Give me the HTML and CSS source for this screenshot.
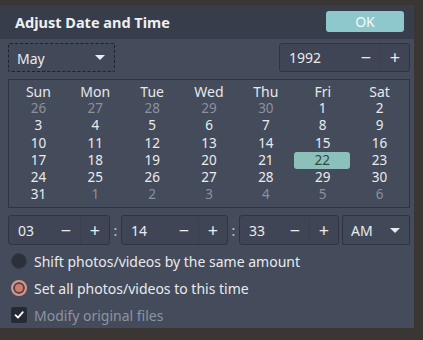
FILE: index.html
```html
<!DOCTYPE html>
<html>
<head>
<meta charset="utf-8">
<link rel="stylesheet" href="styles.css">
</head>
<body>
<div class="dialog">
  <div class="header">
    <div class="title">Adjust Date and Time</div>
    <button class="ok">OK</button>
  </div>
  <div class="content">
    <div class="top-row">
      <div class="combo month focused"><span>May</span><span class="arrow"></span></div>
      <div class="spin year"><span class="val">1992</span><span class="btn minus">−</span><span class="btn plus">+</span></div>
    </div>
    <div class="calendar">
      <div class="dh">Sun</div><div class="dh">Mon</div><div class="dh">Tue</div><div class="dh">Wed</div><div class="dh">Thu</div><div class="dh">Fri</div><div class="dh">Sat</div>
      <div class="d o">26</div><div class="d o">27</div><div class="d o">28</div><div class="d o">29</div><div class="d o">30</div><div class="d">1</div><div class="d">2</div>
      <div class="d">3</div><div class="d">4</div><div class="d">5</div><div class="d">6</div><div class="d">7</div><div class="d">8</div><div class="d">9</div>
      <div class="d">10</div><div class="d">11</div><div class="d">12</div><div class="d">13</div><div class="d">14</div><div class="d">15</div><div class="d">16</div>
      <div class="d">17</div><div class="d">18</div><div class="d">19</div><div class="d">20</div><div class="d">21</div><div class="d sel">22</div><div class="d">23</div>
      <div class="d">24</div><div class="d">25</div><div class="d">26</div><div class="d">27</div><div class="d">28</div><div class="d">29</div><div class="d">30</div>
      <div class="d">31</div><div class="d o">1</div><div class="d o">2</div><div class="d o">3</div><div class="d o">4</div><div class="d o">5</div><div class="d o">6</div>
    </div>
    <div class="time-row">
      <div class="spin hour"><span class="val">03</span><span class="btn minus">−</span><span class="btn plus">+</span></div>
      <span class="colon">:</span>
      <div class="spin minute"><span class="val">14</span><span class="btn minus">−</span><span class="btn plus">+</span></div>
      <span class="colon">:</span>
      <div class="spin second"><span class="val">33</span><span class="btn minus">−</span><span class="btn plus">+</span></div>
      <div class="combo ampm"><span>AM</span><span class="arrow"></span></div>
    </div>
    <div class="option"><span class="radio"></span><span>Shift photos/videos by the same amount</span></div>
    <div class="option"><span class="radio checked"></span><span>Set all photos/videos to this time</span></div>
    <div class="option disabled"><span class="check"><svg width="12" height="12" viewBox="0 0 12 12"><path d="M2.5 6.2 L5 8.7 L9.8 3.2" fill="none" stroke="#ffffff" stroke-width="1.8" stroke-linecap="round" stroke-linejoin="round"/></svg></span><span>Modify original files</span></div>
  </div>
</div>
</body>
</html>
```
FILE: styles.css
```css
html, body {
  margin: 0;
  padding: 0;
  background: #3a3634;
  width: 423px;
  height: 340px;
  overflow: hidden;
}
body {
  font-family: "Noto Sans", "Open Sans", sans-serif;
  font-size: 13px;
  color: #e9ebee;
}
.dialog {
  margin-top: 5px;
  width: 414px;
  height: 323px;
  background: #444b5a;
  display: flex;
  flex-direction: column;
}
.header {
  height: 36px;
  background: #373d4a;
  display: flex;
  align-items: center;
  justify-content: space-between;
  padding: 0 10px 0 15px;
  box-sizing: border-box;
}
.title {
  font-weight: bold;
  font-size: 14.5px;
  color: #eef0f2;
}
.ok {
  width: 78px;
  height: 21px;
  margin-top: -2px;
  border: none;
  border-radius: 3px;
  background: #8ec8cd;
  color: #f4f8f9;
  font-family: inherit;
  font-size: 14px;
  padding: 0;
}
.content {
  padding: 4px 4px 0 8px;
  display: flex;
  flex-direction: column;
}
.top-row {
  display: flex;
  justify-content: space-between;
  height: 29px;
}
.combo {
  box-sizing: border-box;
  border: 1px solid #2f3440;
  border-radius: 2px;
  background: #414858;
  display: flex;
  align-items: center;
  justify-content: space-between;
  padding: 0 8px 0 8px;
  font-size: 14px;
}
.combo.focused {
  border: 1px dashed #1e222a;
}
.month {
  width: 107px;
  height: 29px;
}
.month span:first-child {
  margin-top: 2px;
}
.arrow {
  width: 0;
  height: 0;
  border-left: 5px solid transparent;
  border-right: 5px solid transparent;
  border-top: 5px solid #e8eaed;
  margin-right: 1px;
}
.spin {
  box-sizing: border-box;
  border: 1px solid #2f3440;
  border-radius: 3px;
  background: #3f4555;
  display: flex;
  align-items: center;
  height: 29px;
  font-size: 14px;
}
.spin .val {
  flex: 1;
  padding-left: 9px;
}
.spin .btn {
  width: 28px;
  text-align: center;
  font-size: 18px;
  line-height: 27px;
  height: 27px;
}
.spin .btn.minus {
  border-right: 1px solid #3a404e;
}
.year {
  width: 131px;
}
.calendar {
  margin-top: 7px;
  box-sizing: border-box;
  width: 402px;
  height: 129px;
  border: 1px solid #2f3440;
  display: grid;
  grid-template-columns: repeat(7, 1fr);
  grid-auto-rows: 17.2px;
  padding: 3px 1px 0 1px;
  align-content: start;
  font-size: 13.5px;
}
.calendar .dh, .calendar .d {
  text-align: center;
  line-height: 17px;
}
.calendar .dh {
  font-size: 14px;
  line-height: 18px;
  color: #e6e8eb;
}
.calendar .o {
  color: #8b919d;
}
.calendar .sel {
  background: #8cc0ba;
  color: #2c4a48;
  border-radius: 3px;
  margin: 0 1px 0 0;
}
.time-row {
  margin-top: 7px;
  display: flex;
  align-items: center;
  height: 30px;
}
.time-row .spin {
  height: 30px;
}
.hour { width: 102px; }
.minute { width: 107px; }
.second { width: 100px; }
.colon {
  width: 11px;
  text-align: center;
  font-size: 14px;
  color: #c9ccd2;
}
.ampm {
  margin-left: 3px;
  width: 68px;
  height: 30px;
}
.option {
  display: flex;
  align-items: center;
  height: 26px;
  margin-top: 1px;
  font-size: 14px;
  color: #e8eaed;
}
.time-row + .option {
  margin-top: 3px;
}
.radio {
  box-sizing: border-box;
  width: 16px;
  height: 16px;
  border-radius: 50%;
  background: #2c303a;
  margin: 0 7px 0 3px;
  border: 1px solid #373c48;
}
.radio.checked {
  background: #d27a66;
  border: 2px solid #d9968a;
  box-shadow: inset 0 0 0 2px #4b4652;
}
.check {
  box-sizing: border-box;
  width: 16px;
  height: 16px;
  border-radius: 2px;
  background: #262a35;
  margin: 0 7px 0 3px;
  display: flex;
  align-items: center;
  justify-content: center;
}
.option.disabled {
  color: #8e94a0;
}
```
